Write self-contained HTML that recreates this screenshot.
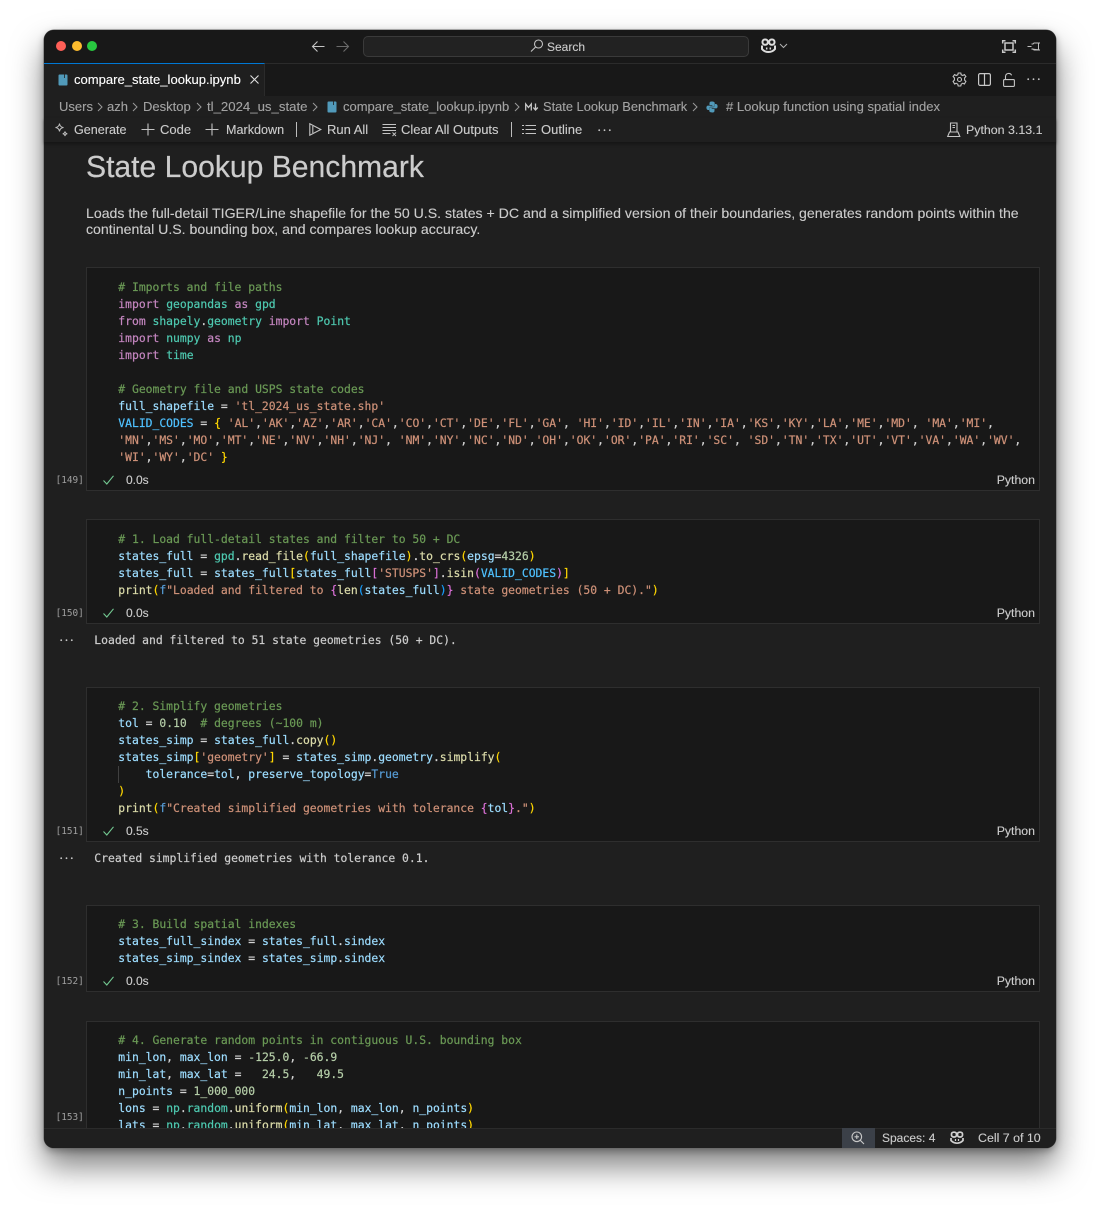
<!DOCTYPE html>
<html><head><meta charset="utf-8"><style>
html,body{margin:0;padding:0;background:#fff;width:1100px;height:1207px;overflow:hidden}
*{box-sizing:border-box}
#w{position:absolute;left:44px;top:30px;width:1012px;height:1118px;border-radius:10px;background:#1f1f1f;box-shadow:0 0 0 .5px #666,0 18px 32px rgba(0,0,0,.5),0 3px 8px rgba(0,0,0,.3)}
#v{position:absolute;left:0;top:0;width:1100px;height:1207px;overflow:hidden}
.a{position:absolute;white-space:pre}
.t{position:absolute;white-space:pre;font:13px/16px "Liberation Sans",sans-serif;color:#cccccc;-webkit-text-stroke:.12px currentColor}
.b{color:#a3a3a3}
.c{position:absolute;left:86px;width:954px;background:#181818;border:1px solid #2e2e2e}
.l{position:absolute;left:118.300px;white-space:pre;font:11.37px/17px "DejaVu Sans Mono","Liberation Mono",monospace;height:17px;color:#d4d4d4;-webkit-text-stroke:.2px currentColor}
.o{left:94.300px;color:#cccccc}
.n{position:absolute;left:55.600px;font:9.4px/12px "DejaVu Sans Mono",monospace;color:#a0a0a0}
.d{position:absolute;left:126px;font:12px/14px "Liberation Sans",sans-serif;color:#cccccc;-webkit-text-stroke:.12px currentColor}
.p{position:absolute;right:65px;font:12.3px/14px "Liberation Sans",sans-serif;color:#cccccc;-webkit-text-stroke:.12px currentColor}
svg{position:absolute;overflow:visible;fill:none}
.g{color:#6a9955}.k{color:#c586c0}.m{color:#4ec9b0}.v{color:#9cdcfe}.C{color:#4fc1ff}.s{color:#ce9178}.y{color:#ffd700}.P{color:#da70d6}.B{color:#179fff}.N{color:#b5cea8}.f{color:#dcdcaa}.T{color:#569cd6}
</style></head><body>
<div id="w"></div>
<div id="v">
<!-- title bar -->
<div class="a" style="left:44px;top:30px;width:1012px;height:66px;background:#181818;border-radius:10px 10px 0 0"></div>
<div class="a" style="left:44px;top:63px;width:1012px;height:1px;background:#2b2b2b"></div>
<div class="a" style="left:55.5px;top:41px;width:10px;height:10px;border-radius:50%;background:#ff5f57"></div>
<div class="a" style="left:71.5px;top:41px;width:10px;height:10px;border-radius:50%;background:#febc2e"></div>
<div class="a" style="left:87px;top:41px;width:10px;height:10px;border-radius:50%;background:#28c840"></div>
<svg style="left:312px;top:40px" width="13" height="13" stroke="#c4c4c4" stroke-width="1.1"><path d="M0.5 6.5H12.5M5.5 1.5L0.5 6.5L5.5 11.5"/></svg>
<svg style="left:336px;top:40px" width="13" height="13" stroke="#6b6b6b" stroke-width="1.1"><path d="M0.5 6.5H12.5M7.5 1.5L12.5 6.5L7.5 11.5"/></svg>
<div class="a" style="left:363px;top:36px;width:386px;height:21px;border-radius:5px;background:#222222;border:1px solid #3a3a3a"></div>
<svg style="left:530px;top:39px" width="14" height="14" stroke="#c4c4c4" stroke-width="1.1"><circle cx="8.5" cy="5" r="4"/><path d="M5.6 8L1 12.5"/></svg>
<div class="t" style="left:547px;top:39px;font-size:12px;color:#cccccc">Search</div>
<svg style="left:761px;top:38px" width="15" height="15" stroke="#dcdcdc" stroke-width="2"><path d="M1 7.500V11C3 13.500 5.500 14 7.500 14S12 13.500 14 11V7.500"/><rect x="1.500" y="1.500" width="5.300" height="5.200" rx="2.300"/><rect x="8.200" y="1.500" width="5.300" height="5.200" rx="2.300"/><path d="M5.700 9.500V11.500M9.300 9.500V11.500" stroke-width="1.500"/></svg>
<svg style="left:779px;top:43px" width="9" height="6" stroke="#b0b0b0" stroke-width="1"><path d="M1 1L4.5 4.5L8 1"/></svg>
<svg style="left:1002px;top:40px" width="14" height="13" stroke="#c8c8c8" stroke-width="1.500"><rect x="3" y="3" width="8" height="7"/><path d="M.7 3.500V.8H3.500M10.500 .8H13.300V3.500M.7 9.500V12.200H3.500M10.500 12.200H13.300V9.500"/></svg>
<svg style="left:1027px;top:41px" width="14" height="11" stroke="#c0c0c0" stroke-width="1"><path d="M.5 5.500H4.500M4.500 3H6L7 2H13M11.500 2V9M13 9H7L6 8H4.500Z"/></svg>
<!-- tab -->
<div class="a" style="left:44px;top:63px;width:221px;height:33px;background:#1f1f1f;border-top:1px solid #0078d4;border-right:1px solid #2b2b2b"></div>
<svg style="left:58px;top:74px" width="10" height="12"><path d="M1.5 0.5H8.5A1 1 0 0 1 9.5 1.5V10.5A1 1 0 0 1 8.5 11.5H1.5A1 1 0 0 1 .5 10.5V1.5A1 1 0 0 1 1.5 .5Z" fill="#519aba"/><path d="M6.5 .5V4" stroke="#1f1f1f" stroke-width=".8"/></svg>
<div class="t" style="left:74px;top:72px;color:#ffffff;font-size:13.05px">compare_state_lookup.ipynb</div>
<svg style="left:250px;top:75px" width="9" height="9" stroke="#e0e0e0" stroke-width="1.1"><path d="M.5 .5L8.5 8.5M8.5 .5L.5 8.5"/></svg>
<!-- tab actions -->
<svg style="left:952px;top:72px" width="15" height="15" stroke="#c4c4c4" stroke-width="1.1"><path d="M6.2 1H8.8L9.2 2.8L10.8 3.5L12.4 2.6L13.9 4.6L12.6 5.9V8.1L13.9 9.4L12.4 12L10.8 11.2L9.2 12.2L8.8 14H6.2L5.8 12.2L4.2 11.2L2.6 12L1.1 9.4L2.4 8.1V5.9L1.1 4.6L2.6 2.6L4.2 3.5L5.8 2.8Z"/><circle cx="7.5" cy="7.5" r="2"/></svg>
<svg style="left:978px;top:73px" width="13" height="13" stroke="#c8c8c8" stroke-width="1.2"><rect x=".6" y=".6" width="11.8" height="11.8" rx="1.5"/><path d="M6.5 .6V12.4"/></svg>
<svg style="left:1003px;top:73px" width="12" height="14" stroke="#c4c4c4" stroke-width="1.1"><rect x=".6" y="6.6" width="10.8" height="6.8" rx="1"/><path d="M2.5 6.5V3.5A3.2 3.2 0 0 1 8.6 2.3"/></svg>
<svg style="left:1027px;top:78px" width="13" height="3"><circle cx="1.2" cy="1.2" r=".9" fill="#c8c8c8"/><circle cx="6.5" cy="1.2" r=".9" fill="#c8c8c8"/><circle cx="11.8" cy="1.2" r=".9" fill="#c8c8c8"/></svg>
<!-- breadcrumb -->
<div class="t b" style="left:59px;top:99px">Users</div>
<div class="t b" style="left:107px;top:99px">azh</div>
<div class="t b" style="left:143px;top:99px">Desktop</div>
<div class="t b" style="left:207px;top:99px;font-size:13.2px">tl_2024_us_state</div>
<svg style="left:97px;top:102px" width="6" height="10" stroke="#9a9a9a"><path d="M1 1L5 5L1 9"/></svg>
<svg style="left:132px;top:102px" width="6" height="10" stroke="#9a9a9a"><path d="M1 1L5 5L1 9"/></svg>
<svg style="left:196px;top:102px" width="6" height="10" stroke="#9a9a9a"><path d="M1 1L5 5L1 9"/></svg>
<svg style="left:312px;top:102px" width="6" height="10" stroke="#9a9a9a"><path d="M1 1L5 5L1 9"/></svg>
<svg style="left:327px;top:101px" width="10" height="12"><path d="M1.5 0.5H8.5A1 1 0 0 1 9.5 1.5V10.5A1 1 0 0 1 8.5 11.5H1.5A1 1 0 0 1 .5 10.5V1.5A1 1 0 0 1 1.5 .5Z" fill="#519aba"/><path d="M6.5 .5V4" stroke="#1f1f1f" stroke-width=".8"/></svg>
<div class="t b" style="left:343px;top:99px">compare_state_lookup.ipynb</div>
<svg style="left:514px;top:102px" width="6" height="10" stroke="#9a9a9a"><path d="M1 1L5 5L1 9"/></svg>
<svg style="left:525px;top:103px" width="14" height="8" stroke="#c8c8c8" stroke-width="1.3"><path d="M.7 7.5V1L3.5 4.5L6.3 1V7.5M10.5 .5V6.5M8.3 4.5L10.5 7L12.8 4.5"/></svg>
<div class="t b" style="left:543px;top:99px;font-size:12.85px">State Lookup Benchmark</div>
<svg style="left:692px;top:102px" width="6" height="10" stroke="#9a9a9a"><path d="M1 1L5 5L1 9"/></svg>
<svg style="left:706px;top:101px" width="12" height="12"><path d="M6 .5C3.5.5 3.5 1.5 3.5 3V4H6.3V4.6H2C.8 4.6.4 5.8.4 6.8S1 9 2 9H3.2V7.5C3.2 6.5 4 5.8 5 5.8H7.5C8.2 5.8 8.7 5.2 8.7 4.6V2.2C8.7 1 7.5.5 6 .5Z" fill="#519aba"/><path d="M6 11.5C8.5 11.5 8.5 10.5 8.5 9V8H5.7V7.4H10C11.2 7.4 11.6 6.2 11.6 5.2S11 3 10 3H8.9V4.5C8.9 5.5 8 6.2 7 6.2H4.5C3.8 6.2 3.3 6.8 3.3 7.4V9.8C3.3 11 4.5 11.5 6 11.5Z" fill="#519aba"/></svg>
<div class="t b" style="left:726px;top:99px;font-size:13.05px"># Lookup function using spatial index</div>
<!-- toolbar -->
<div class="a" style="left:44px;top:118px;width:1012px;height:24px;background:#1f1f1f;box-shadow:0 2px 3px rgba(0,0,0,.35)"></div>
<svg style="left:54px;top:122px" width="15" height="15" stroke="#c0c0c0" stroke-width="1"><path d="M5.5 1.5C5.8 4 7 5.2 9.5 5.5C7 5.8 5.8 7 5.5 9.5C5.2 7 4 5.8 1.5 5.5C4 5.2 5.2 4 5.5 1.5Z"/><path d="M11 9.5C11.2 11 11.8 11.6 13.3 11.8C11.8 12 11.2 12.6 11 14C10.8 12.6 10.2 12 8.7 11.8C10.2 11.6 10.8 11 11 9.5Z"/></svg>
<div class="t" style="left:74px;top:122px;font-size:12.6px">Generate</div>
<svg style="left:141px;top:123px" width="14" height="13" stroke="#c4c4c4" stroke-width="1.1"><path d="M.5 6.5H13.5M7 .5V12.5"/></svg>
<div class="t" style="left:160px;top:122px">Code</div>
<svg style="left:205px;top:123px" width="14" height="13" stroke="#c4c4c4" stroke-width="1.1"><path d="M.5 6.5H13.5M7 .5V12.5"/></svg>
<div class="t" style="left:226px;top:122px;font-size:12.6px">Markdown</div>
<div class="a" style="left:296px;top:122px;width:1px;height:15px;background:#bdbdbd"></div>
<svg style="left:309px;top:123px" width="13" height="14" stroke="#c4c4c4" stroke-width="1.1"><path d="M.8 .8L11.8 6.5L.8 12.2Z"/><path d="M3.8 3V10"/></svg>
<div class="t" style="left:327px;top:122px">Run All</div>
<svg style="left:382px;top:123px" width="15" height="14" stroke="#c4c4c4" stroke-width="1.1"><path d="M.5 1.5H14M.5 4.5H14M.5 7.5H14M.5 10.5H8.5"/><path d="M10.5 9.5L14 13M14 9.5L10.5 13" stroke-width=".9"/></svg>
<div class="t" style="left:401px;top:122px">Clear All Outputs</div>
<div class="a" style="left:511px;top:122px;width:1px;height:15px;background:#bdbdbd"></div>
<svg style="left:522px;top:124px" width="14" height="12" stroke="#c4c4c4" stroke-width="1.1"><path d="M0 1.5H2M0 5.5H2M0 9.5H2M3.5 1.5H14M3.5 5.5H14M3.5 9.5H14"/></svg>
<div class="t" style="left:541px;top:122px">Outline</div>
<svg style="left:598px;top:129px" width="13" height="3"><circle cx="1.2" cy="1.2" r=".9" fill="#c8c8c8"/><circle cx="6.5" cy="1.2" r=".9" fill="#c8c8c8"/><circle cx="11.8" cy="1.2" r=".9" fill="#c8c8c8"/></svg>
<svg style="left:947px;top:122px" width="14" height="16" stroke="#c4c4c4" stroke-width="1.1"><path d="M3.500 1H10V10H3.500ZM2.500 10H11L12.800 14.500H.7Z"/><path d="M5.500 3.500H8M5.500 5.500H8"/></svg>
<div class="t" style="left:966px;top:122px;font-size:12.4px">Python 3.13.1</div>
<!-- markdown -->
<div class="a" style="left:86px;top:149px;font:30.1px/38px 'Liberation Sans',sans-serif;color:#cccccc;-webkit-text-stroke:.2px currentColor">State Lookup Benchmark</div>
<div class="a" style="left:86px;top:205px;font:14.12px/16px 'Liberation Sans',sans-serif;color:#cccccc;-webkit-text-stroke:.12px currentColor">Loads the full-detail TIGER/Line shapefile for the 50 U.S. states + DC and a simplified version of their boundaries, generates random points within the</div>
<div class="a" style="left:86px;top:221px;font:14.12px/16px 'Liberation Sans',sans-serif;color:#cccccc;-webkit-text-stroke:.12px currentColor">continental U.S. bounding box, and compares lookup accuracy.</div>
<!-- cell 1 -->
<div class="c" style="top:267px;height:224px"></div>
<div class="l g" style="top:279px"># Imports and file paths</div>
<div class="l" style="top:296px"><span class="k">import</span> <span class="m">geopandas</span> <span class="k">as</span> <span class="m">gpd</span></div>
<div class="l" style="top:313px"><span class="k">from</span> <span class="m">shapely</span>.<span class="m">geometry</span> <span class="k">import</span> <span class="m">Point</span></div>
<div class="l" style="top:330px"><span class="k">import</span> <span class="m">numpy</span> <span class="k">as</span> <span class="m">np</span></div>
<div class="l" style="top:347px"><span class="k">import</span> <span class="m">time</span></div>
<div class="l g" style="top:381px"># Geometry file and USPS state codes</div>
<div class="l" style="top:398px"><span class="v">full_shapefile</span> = <span class="s">'tl_2024_us_state.shp'</span></div>
<div class="l" style="top:415px"><span class="C">VALID_CODES</span> = <span class="y">{</span> <span class="s">'AL'</span>,<span class="s">'AK'</span>,<span class="s">'AZ'</span>,<span class="s">'AR'</span>,<span class="s">'CA'</span>,<span class="s">'CO'</span>,<span class="s">'CT'</span>,<span class="s">'DE'</span>,<span class="s">'FL'</span>,<span class="s">'GA'</span>, <span class="s">'HI'</span>,<span class="s">'ID'</span>,<span class="s">'IL'</span>,<span class="s">'IN'</span>,<span class="s">'IA'</span>,<span class="s">'KS'</span>,<span class="s">'KY'</span>,<span class="s">'LA'</span>,<span class="s">'ME'</span>,<span class="s">'MD'</span>, <span class="s">'MA'</span>,<span class="s">'MI'</span>,</div>
<div class="l" style="top:432px"><span class="s">'MN'</span>,<span class="s">'MS'</span>,<span class="s">'MO'</span>,<span class="s">'MT'</span>,<span class="s">'NE'</span>,<span class="s">'NV'</span>,<span class="s">'NH'</span>,<span class="s">'NJ'</span>, <span class="s">'NM'</span>,<span class="s">'NY'</span>,<span class="s">'NC'</span>,<span class="s">'ND'</span>,<span class="s">'OH'</span>,<span class="s">'OK'</span>,<span class="s">'OR'</span>,<span class="s">'PA'</span>,<span class="s">'RI'</span>,<span class="s">'SC'</span>, <span class="s">'SD'</span>,<span class="s">'TN'</span>,<span class="s">'TX'</span>,<span class="s">'UT'</span>,<span class="s">'VT'</span>,<span class="s">'VA'</span>,<span class="s">'WA'</span>,<span class="s">'WV'</span>,</div>
<div class="l" style="top:449px"><span class="s">'WI'</span>,<span class="s">'WY'</span>,<span class="s">'DC'</span> <span class="y">}</span></div>
<div class="n" style="top:475px">[149]</div>
<svg style="left:103px;top:475px" width="11" height="10" stroke="#73c991" stroke-width="1.1"><path d="M.5 5.500L3.800 9L10.500 .8"/></svg>
<div class="d" style="top:473px">0.0s</div>
<div class="p" style="top:473px">Python</div>
<!-- cell 2 -->
<div class="c" style="top:519px;height:105px"></div>
<div class="l g" style="top:531px"># 1. Load full-detail states and filter to 50 + DC</div>
<div class="l" style="top:548px"><span class="v">states_full</span> = <span class="m">gpd</span>.<span class="f">read_file</span><span class="y">(</span><span class="v">full_shapefile</span><span class="y">)</span>.<span class="f">to_crs</span><span class="y">(</span><span class="v">epsg</span>=<span class="N">4326</span><span class="y">)</span></div>
<div class="l" style="top:565px"><span class="v">states_full</span> = <span class="v">states_full</span><span class="y">[</span><span class="v">states_full</span><span class="P">[</span><span class="s">'STUSPS'</span><span class="P">]</span>.<span class="f">isin</span><span class="P">(</span><span class="C">VALID_CODES</span><span class="P">)</span><span class="y">]</span></div>
<div class="l" style="top:582px"><span class="f">print</span><span class="y">(</span><span class="T">f</span><span class="s">"Loaded and filtered to </span><span class="P">{</span><span class="f">len</span><span class="B">(</span><span class="v">states_full</span><span class="B">)</span><span class="P">}</span><span class="s"> state geometries (50 + DC)."</span><span class="y">)</span></div>
<div class="n" style="top:608px">[150]</div>
<svg style="left:103px;top:608px" width="11" height="10" stroke="#73c991" stroke-width="1.1"><path d="M.5 5.500L3.800 9L10.500 .8"/></svg>
<div class="d" style="top:606px">0.0s</div>
<div class="p" style="top:606px">Python</div>
<svg style="left:60px;top:639px" width="13" height="3"><circle cx="1.2" cy="1.2" r=".9" fill="#c8c8c8"/><circle cx="6.5" cy="1.2" r=".9" fill="#c8c8c8"/><circle cx="11.8" cy="1.2" r=".9" fill="#c8c8c8"/></svg>
<div class="l o" style="top:632px">Loaded and filtered to 51 state geometries (50 + DC).</div>
<!-- cell 3 -->
<div class="c" style="top:687px;height:155px"></div>
<div class="l g" style="top:698px"># 2. Simplify geometries</div>
<div class="l" style="top:715px"><span class="v">tol</span> = <span class="N">0.10</span>  <span class="g"># degrees (~100 m)</span></div>
<div class="l" style="top:732px"><span class="v">states_simp</span> = <span class="v">states_full</span>.<span class="f">copy</span><span class="y">()</span></div>
<div class="l" style="top:749px"><span class="v">states_simp</span><span class="y">[</span><span class="s">'geometry'</span><span class="y">]</span> = <span class="v">states_simp</span>.<span class="v">geometry</span>.<span class="f">simplify</span><span class="y">(</span></div>
<div class="a" style="left:118px;top:766px;width:1px;height:17px;background:#404040"></div>
<div class="l" style="top:766px">    <span class="v">tolerance</span>=<span class="v">tol</span>, <span class="v">preserve_topology</span>=<span class="T">True</span></div>
<div class="l y" style="top:783px">)</div>
<div class="l" style="top:800px"><span class="f">print</span><span class="y">(</span><span class="T">f</span><span class="s">"Created simplified geometries with tolerance </span><span class="P">{</span><span class="v">tol</span><span class="P">}</span><span class="s">."</span><span class="y">)</span></div>
<div class="n" style="top:826px">[151]</div>
<svg style="left:103px;top:826px" width="11" height="10" stroke="#73c991" stroke-width="1.1"><path d="M.5 5.500L3.800 9L10.500 .8"/></svg>
<div class="d" style="top:824px">0.5s</div>
<div class="p" style="top:824px">Python</div>
<svg style="left:60px;top:857px" width="13" height="3"><circle cx="1.2" cy="1.2" r=".9" fill="#c8c8c8"/><circle cx="6.5" cy="1.2" r=".9" fill="#c8c8c8"/><circle cx="11.8" cy="1.2" r=".9" fill="#c8c8c8"/></svg>
<div class="l o" style="top:850px">Created simplified geometries with tolerance 0.1.</div>
<!-- cell 4 -->
<div class="c" style="top:905px;height:87px"></div>
<div class="l g" style="top:916px"># 3. Build spatial indexes</div>
<div class="l" style="top:933px"><span class="v">states_full_sindex</span> = <span class="v">states_full</span>.<span class="v">sindex</span></div>
<div class="l" style="top:950px"><span class="v">states_simp_sindex</span> = <span class="v">states_simp</span>.<span class="v">sindex</span></div>
<div class="n" style="top:976px">[152]</div>
<svg style="left:103px;top:976px" width="11" height="10" stroke="#73c991" stroke-width="1.1"><path d="M.5 5.500L3.800 9L10.500 .8"/></svg>
<div class="d" style="top:974px">0.0s</div>
<div class="p" style="top:974px">Python</div>
<!-- cell 5 -->
<div class="c" style="top:1021px;height:107px;border-bottom:none"></div>
<div class="l g" style="top:1032px"># 4. Generate random points in contiguous U.S. bounding box</div>
<div class="l" style="top:1049px"><span class="v">min_lon</span>, <span class="v">max_lon</span> = <span class="N">-125.0</span>, <span class="N">-66.9</span></div>
<div class="l" style="top:1066px"><span class="v">min_lat</span>, <span class="v">max_lat</span> =   <span class="N">24.5</span>,   <span class="N">49.5</span></div>
<div class="l" style="top:1083px"><span class="v">n_points</span> = <span class="N">1_000_000</span></div>
<div class="l" style="top:1100px"><span class="v">lons</span> = <span class="m">np</span>.<span class="m">random</span>.<span class="f">uniform</span><span class="y">(</span><span class="v">min_lon</span>, <span class="v">max_lon</span>, <span class="v">n_points</span><span class="y">)</span></div>
<div class="l" style="top:1117px"><span class="v">lats</span> = <span class="m">np</span>.<span class="m">random</span>.<span class="f">uniform</span><span class="y">(</span><span class="v">min_lat</span>, <span class="v">max_lat</span>, <span class="v">n_points</span><span class="y">)</span></div>
<div class="n" style="top:1112px">[153]</div>
<!-- status bar -->
<div class="a" style="left:44px;top:1128px;width:1012px;height:20px;background:#1f1f1f;border-top:1px solid #2b2b2b;border-radius:0 0 10px 10px"></div>
<div class="a" style="left:842px;top:1128px;width:33px;height:20px;background:#3b4048"></div>
<svg style="left:851px;top:1131px" width="14" height="14" stroke="#c8c8c8" stroke-width="1.1"><circle cx="5.800" cy="5.800" r="4.800"/><path d="M9.300 9.300L13 13M3.500 5.800H8M5.800 3.500V8"/></svg>
<div class="t" style="left:882px;top:1131px;font-size:12px;line-height:15px">Spaces: 4</div>
<svg style="left:950px;top:1131px" width="14" height="13" stroke="#d0d0d0" stroke-width="1.700"><path d="M1 7V9.500C3 11.500 5 12.200 7 12.200S11 11.500 13 9.500V7"/><rect x="1.500" y="1.200" width="5" height="4.800" rx="2"/><rect x="7.500" y="1.200" width="5" height="4.800" rx="2"/><path d="M5.500 8V10M8.500 8V10" stroke-width="1.200"/></svg>
<div class="t" style="left:978px;top:1131px;font-size:12.4px;line-height:15px">Cell 7 of 10</div>
</div>
</body></html>
